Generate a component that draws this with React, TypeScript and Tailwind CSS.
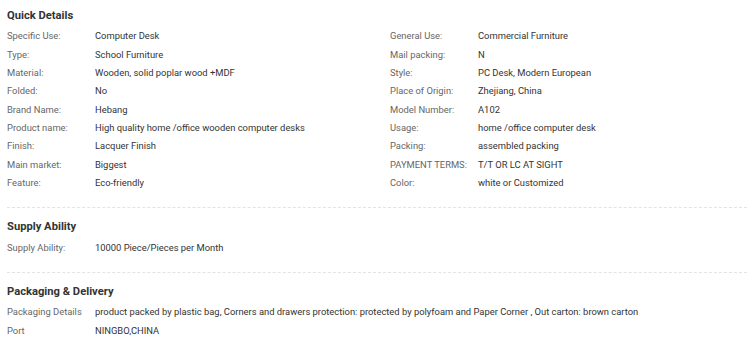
const quickLeft: [string, string][] = [
  ['Specific Use:', 'Computer Desk'],
  ['Type:', 'School Furniture'],
  ['Material:', 'Wooden, solid poplar wood +MDF'],
  ['Folded:', 'No'],
  ['Brand Name:', 'Hebang'],
  ['Product name:', 'High quality home /office wooden computer desks'],
  ['Finish:', 'Lacquer Finish'],
  ['Main market:', 'Biggest'],
  ['Feature:', 'Eco-friendly'],
];

const quickRight: [string, string][] = [
  ['General Use:', 'Commercial Furniture'],
  ['Mail packing:', 'N'],
  ['Style:', 'PC Desk, Modern European'],
  ['Place of Origin:', 'Zhejiang, China'],
  ['Model Number:', 'A102'],
  ['Usage:', 'home /office computer desk'],
  ['Packing:', 'assembled packing'],
  ['PAYMENT TERMS:', 'T/T OR LC AT SIGHT'],
  ['Color:', 'white or Customized'],
];

function Row({ label, value }: { label: string; value: string }) {
  return (
    <div className="flex h-[18.375px] items-center whitespace-nowrap">
      <span className="w-[88px] shrink-0 text-[#666]">{label}</span>
      <span className="text-[#333]">{value}</span>
    </div>
  );
}

function Heading({ children }: { children: string }) {
  return <h3 className="h-[21px] flex items-center text-[11.2px] font-bold text-[#333]">{children}</h3>;
}

export default function App() {
  return (
    <div className="w-[752px] h-[346px] bg-white px-[7px] text-[9.4px] font-['Roboto',sans-serif] overflow-hidden">
      <section className="pt-[6px] pb-[14.5px] border-b border-dashed border-[#e3e3e3] w-[740px]">
        <Heading>Quick Details</Heading>
        <div className="grid grid-cols-[383px_1fr]">
          <div>
            {quickLeft.map(([l, v]) => (
              <Row key={l} label={l} value={v} />
            ))}
          </div>
          <div>
            {quickRight.map(([l, v]) => (
              <Row key={l} label={l} value={v} />
            ))}
          </div>
        </div>
      </section>

      <section className="pt-[9.5px] pb-[15px] border-b border-dashed border-[#e3e3e3] w-[740px]">
        <Heading>Supply Ability</Heading>
        <Row label="Supply Ability:" value="10000 Piece/Pieces per Month" />
      </section>

      <section className="pt-[9.5px] w-[740px]">
        <Heading>Packaging &amp; Delivery</Heading>
        <Row
          label="Packaging Details"
          value="product packed by plastic bag, Corners and drawers protection: protected by polyfoam and Paper Corner , Out carton: brown carton"
        />
        <Row label="Port" value="NINGBO,CHINA" />
      </section>
    </div>
  );
}
